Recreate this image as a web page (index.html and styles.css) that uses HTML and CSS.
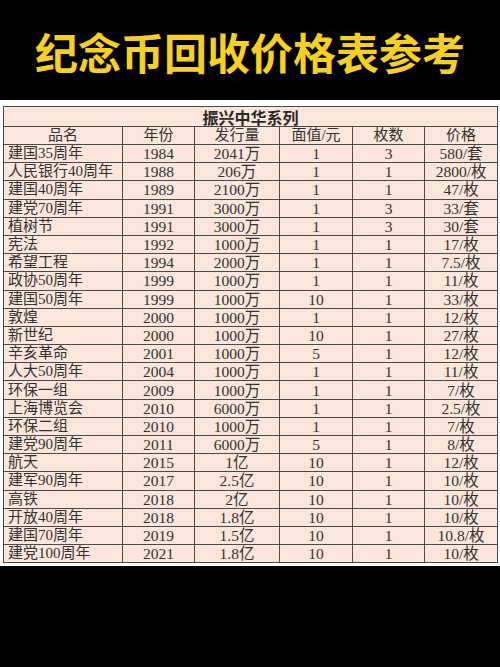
FILE: index.html
```html
<!DOCTYPE html>
<html lang="zh-CN">
<head>
<meta charset="utf-8">
<title>纪念币回收价格表参考</title>
<link rel="stylesheet" href="styles.css">
</head>
<body>
<div class="page">
  <header class="banner">
    <h1 class="title">纪念币回收价格表参考</h1>
  </header>
  <section class="sheet">
    <table class="grid">
      <colgroup>
        <col class="c1"><col class="c2"><col class="c3"><col class="c4"><col class="c5"><col class="c6">
      </colgroup>
      <tr class="caption-row"><td colspan="6" class="caption">振兴中华系列</td></tr>
      <tr class="head-row"><td>品名</td><td>年份</td><td>发行量</td><td>面值/元</td><td>枚数</td><td>价格</td></tr>
      <tr><td class="name">建国35周年</td><td>1984</td><td>2041万</td><td>1</td><td>3</td><td>580/套</td></tr>
      <tr><td class="name">人民银行40周年</td><td>1988</td><td>206万</td><td>1</td><td>1</td><td>2800/枚</td></tr>
      <tr><td class="name">建国40周年</td><td>1989</td><td>2100万</td><td>1</td><td>1</td><td>47/枚</td></tr>
      <tr><td class="name">建党70周年</td><td>1991</td><td>3000万</td><td>1</td><td>3</td><td>33/套</td></tr>
      <tr><td class="name">植树节</td><td>1991</td><td>3000万</td><td>1</td><td>3</td><td>30/套</td></tr>
      <tr><td class="name">宪法</td><td>1992</td><td>1000万</td><td>1</td><td>1</td><td>17/枚</td></tr>
      <tr><td class="name">希望工程</td><td>1994</td><td>2000万</td><td>1</td><td>1</td><td>7.5/枚</td></tr>
      <tr><td class="name">政协50周年</td><td>1999</td><td>1000万</td><td>1</td><td>1</td><td>11/枚</td></tr>
      <tr><td class="name">建国50周年</td><td>1999</td><td>1000万</td><td>10</td><td>1</td><td>33/枚</td></tr>
      <tr><td class="name">敦煌</td><td>2000</td><td>1000万</td><td>1</td><td>1</td><td>12/枚</td></tr>
      <tr><td class="name">新世纪</td><td>2000</td><td>1000万</td><td>10</td><td>1</td><td>27/枚</td></tr>
      <tr><td class="name">辛亥革命</td><td>2001</td><td>1000万</td><td>5</td><td>1</td><td>12/枚</td></tr>
      <tr><td class="name">人大50周年</td><td>2004</td><td>1000万</td><td>1</td><td>1</td><td>11/枚</td></tr>
      <tr><td class="name">环保一组</td><td>2009</td><td>1000万</td><td>1</td><td>1</td><td>7/枚</td></tr>
      <tr><td class="name">上海博览会</td><td>2010</td><td>6000万</td><td>1</td><td>1</td><td>2.5/枚</td></tr>
      <tr><td class="name">环保二组</td><td>2010</td><td>1000万</td><td>1</td><td>1</td><td>7/枚</td></tr>
      <tr><td class="name">建党90周年</td><td>2011</td><td>6000万</td><td>5</td><td>1</td><td>8/枚</td></tr>
      <tr><td class="name">航天</td><td>2015</td><td>1亿</td><td>10</td><td>1</td><td>12/枚</td></tr>
      <tr><td class="name">建军90周年</td><td>2017</td><td>2.5亿</td><td>10</td><td>1</td><td>10/枚</td></tr>
      <tr><td class="name">高铁</td><td>2018</td><td>2亿</td><td>10</td><td>1</td><td>10/枚</td></tr>
      <tr><td class="name">开放40周年</td><td>2018</td><td>1.8亿</td><td>10</td><td>1</td><td>10/枚</td></tr>
      <tr><td class="name">建国70周年</td><td>2019</td><td>1.5亿</td><td>10</td><td>1</td><td>10.8/枚</td></tr>
      <tr><td class="name">建党100周年</td><td>2021</td><td>1.8亿</td><td>10</td><td>1</td><td>10/枚</td></tr>
    </table>
  </section>
</div>
</body>
</html>
```
FILE: styles.css
```css
html, body {
  margin: 0;
  padding: 0;
  background: #000;
}
.page {
  width: 500px;
  height: 667px;
  background: #000;
  overflow: hidden;
}
.banner {
  height: 100px;
  display: flex;
  align-items: center;
  justify-content: center;
}
.title {
  margin: 0;
  padding-top: 2px;
  font-family: "Noto Sans CJK SC", sans-serif;
  font-weight: 700;
  font-size: 43px;
  line-height: 1;
  color: #f7d11e;
  letter-spacing: 0;
}
.sheet {
  background: #fff;
  padding: 6px 3px 3px 3px;
  width: 494px;
}
.grid {
  border-collapse: collapse;
  table-layout: fixed;
  width: 494px;
  background: #fae6da;
  font-family: "Liberation Serif", "Noto Sans CJK SC", serif;
  font-size: 15.5px;
  color: #333;
}
.c1 { width: 119px; }
.c2 { width: 72px; }
.c3 { width: 85px; }
.c4 { width: 73px; }
.c5 { width: 72px; }
.c6 { width: 73px; }
.grid td {
  border: 1px solid #4a4a4a;
  padding: 0;
  height: 17.2px;
  line-height: 17px;
  text-align: center;
  white-space: nowrap;
}
.grid td.name {
  text-align: left;
  padding-left: 4px;
  font-size: 15px;
}
.caption-row td.caption {
  height: 19px;
  font-family: "Noto Sans CJK SC", sans-serif;
  font-weight: 700;
  font-size: 16px;
  line-height: 18px;
  color: #2a2a2a;
}
.head-row td {
  height: 16.5px;
  font-size: 15px;
}
```
